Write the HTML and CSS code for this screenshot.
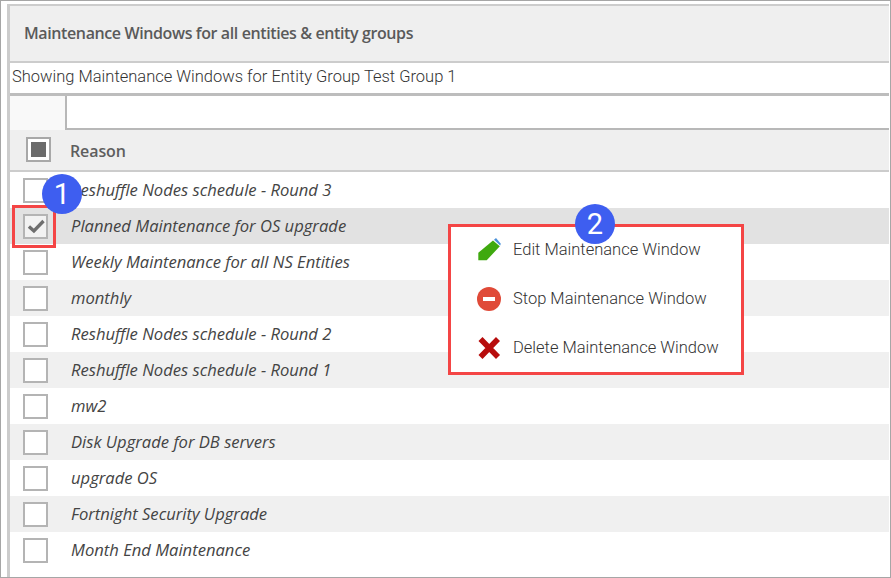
FILE: index.html
```html
<!DOCTYPE html>
<html lang="en">
<head>
<meta charset="utf-8">
<title>Maintenance Windows</title>
<link rel="stylesheet" href="styles.css">
</head>
<body>
<div class="frame">
  <section class="panel">
    <h1 class="title">Maintenance Windows for all entities &amp; entity groups</h1>
    <p class="subtitle">Showing Maintenance Windows for Entity Group Test Group 1</p>
    <div class="filter"><div class="filter-cell"></div><div class="filter-input"></div></div>
    <div class="head">
      <span class="box box-head"><span class="box-fill"></span></span>
      <span class="head-label">Reason</span>
    </div>
    <div class="row"><span class="box"></span><span class="reason">Reshuffle Nodes schedule - Round 3</span></div>
    <div class="row selected">
      <span class="box"><svg class="check" viewBox="0 0 24 24" width="20" height="20"><path d="M3.5 12.5 L9.5 18 L21 6" fill="none" stroke="#6e6e6e" stroke-width="4"/></svg></span>
      <span class="reason">Planned Maintenance for OS upgrade</span>
    </div>
    <div class="row"><span class="box"></span><span class="reason">Weekly Maintenance for all NS Entities</span></div>
    <div class="row alt"><span class="box"></span><span class="reason">monthly</span></div>
    <div class="row"><span class="box"></span><span class="reason">Reshuffle Nodes schedule - Round 2</span></div>
    <div class="row alt"><span class="box"></span><span class="reason">Reshuffle Nodes schedule - Round 1</span></div>
    <div class="row"><span class="box"></span><span class="reason">mw2</span></div>
    <div class="row alt"><span class="box"></span><span class="reason">Disk Upgrade for DB servers</span></div>
    <div class="row"><span class="box"></span><span class="reason">upgrade OS</span></div>
    <div class="row alt"><span class="box"></span><span class="reason">Fortnight Security Upgrade</span></div>
    <div class="row"><span class="box"></span><span class="reason">Month End Maintenance</span></div>
  </section>

  <div class="marker-check"></div>
  <span class="badge badge-1">1</span>

  <div class="menu">
    <div class="menu-item">
      <svg class="menu-icon" viewBox="0 0 24 24" width="24" height="24"><path d="M1.3 22.3 L1.3 14.7 L16 2.6 L22.8 8.2 L9.7 22.3 Z" fill="#3fa90f"/><path d="M17 1.8 L19 0 L23.8 5.7 L23.2 7.4 Z" fill="#4a90d9"/></svg>
      <span>Edit Maintenance Window</span>
    </div>
    <div class="menu-item">
      <svg class="menu-icon" viewBox="0 0 24 24" width="24" height="24"><circle cx="12" cy="12" r="12" fill="#e04a38"/><rect x="6" y="10" width="12" height="4" fill="#fff"/></svg>
      <span>Stop Maintenance Window</span>
    </div>
    <div class="menu-item">
      <svg class="menu-icon" viewBox="0 0 24 24" width="24" height="24"><path d="M3.5 3 L21 21 M21 3 L3.5 21" stroke="#b70d0d" stroke-width="5.6" fill="none"/></svg>
      <span>Delete Maintenance Window</span>
    </div>
    <span class="badge badge-2">2</span>
  </div>
</div>
</body>
</html>
```

FILE: styles.css
```css
* { box-sizing: border-box; }
html, body { margin: 0; padding: 0; background: #fff; }
body { width: 891px; height: 578px; overflow: hidden; }
.frame {
  position: relative;
  width: 891px;
  height: 578px;
  padding: 3px 1px 0 2px;
  border: 1px solid #a6a6a6;
  overflow: hidden;
}
.panel {
  margin-left: 4px;
  height: 573px;
  border: solid #cccccc;
  border-width: 2px 0 0 3px;
  background: #fff;
}
.title {
  margin: 0;
  height: 57px;
  padding: 0 0 2px 14px;
  display: flex;
  align-items: center;
  background: #efefef;
  border-bottom: 2px solid #cccccc;
  font: 600 16px "Open Sans", sans-serif;
  letter-spacing: -0.39px;
  color: #5a5a5a;
}
.subtitle {
  margin: 0;
  height: 33px;
  padding: 0 0 3px 2px;
  display: flex;
  align-items: center;
  border-bottom: 3px solid #bdbdbd;
  font: 300 16.5px Roboto, sans-serif;
  color: #333;
}
.filter { display: flex; height: 34px; }
.filter-cell { width: 55px; background: #f9f9f9; }
.filter-input { flex: 1; border: solid #b8b8b8; border-width: 0 0 2px 2px; }
.head {
  height: 42px;
  display: flex;
  align-items: center;
  background: #efefef;
  border-bottom: 2px solid #cccccc;
  padding-bottom: 2px;
}
.head-label {
  margin-left: 19px;
  padding-top: 3px;
  font: 600 16px "Open Sans", sans-serif;
  letter-spacing: -0.1px;
  color: #5e5e5e;
}
.row {
  height: 36px;
  display: flex;
  align-items: center;
  background: #fff;
}
.row.alt { background: #f0f0f0; }
.row.selected { background: #e2e2e2; }
.box {
  flex: none;
  width: 25px;
  height: 25px;
  margin-left: 13px;
  display: flex;
  align-items: center;
  justify-content: center;
  background: #fff;
  border: 2px solid #b4b4b4;
}
.row.selected .box { background: #f2f2f2; }
.box-head { margin-left: 16px; border-color: #a8a8a8; }
.box-fill { width: 15px; height: 15px; background: #6b6b6b; }
.reason {
  margin-left: 23px;
  padding-bottom: 2px;
  font: italic 400 16.6px "Open Sans", sans-serif;
  color: #444;
}
.marker-check {
  position: absolute;
  left: 11px;
  top: 204px;
  width: 44px;
  height: 43px;
  border: 3px solid #f44545;
}
.badge {
  position: absolute;
  width: 40px;
  height: 40px;
  border-radius: 50%;
  display: flex;
  align-items: center;
  justify-content: center;
  background: #3e5ef0;
  color: #fff;
  font: 400 29px Roboto, sans-serif;
}
.badge-1 { left: 41px; top: 173px; }
.badge-2 { left: 124px; top: -23px; }
.menu {
  position: absolute;
  left: 447px;
  top: 223px;
  width: 296px;
  height: 151px;
  padding: 0 0 0 26px;
  display: flex;
  flex-direction: column;
  background: #fff;
  border: 3px solid #f44545;
}
.menu-item {
  flex: none;
  height: 49px;
  display: flex;
  align-items: center;
  gap: 12px;
  font: 300 16.5px Roboto, sans-serif;
  color: #333;
  white-space: nowrap;
  position: relative;
  top: -2px;
}
.menu-icon { flex: none; }
```
